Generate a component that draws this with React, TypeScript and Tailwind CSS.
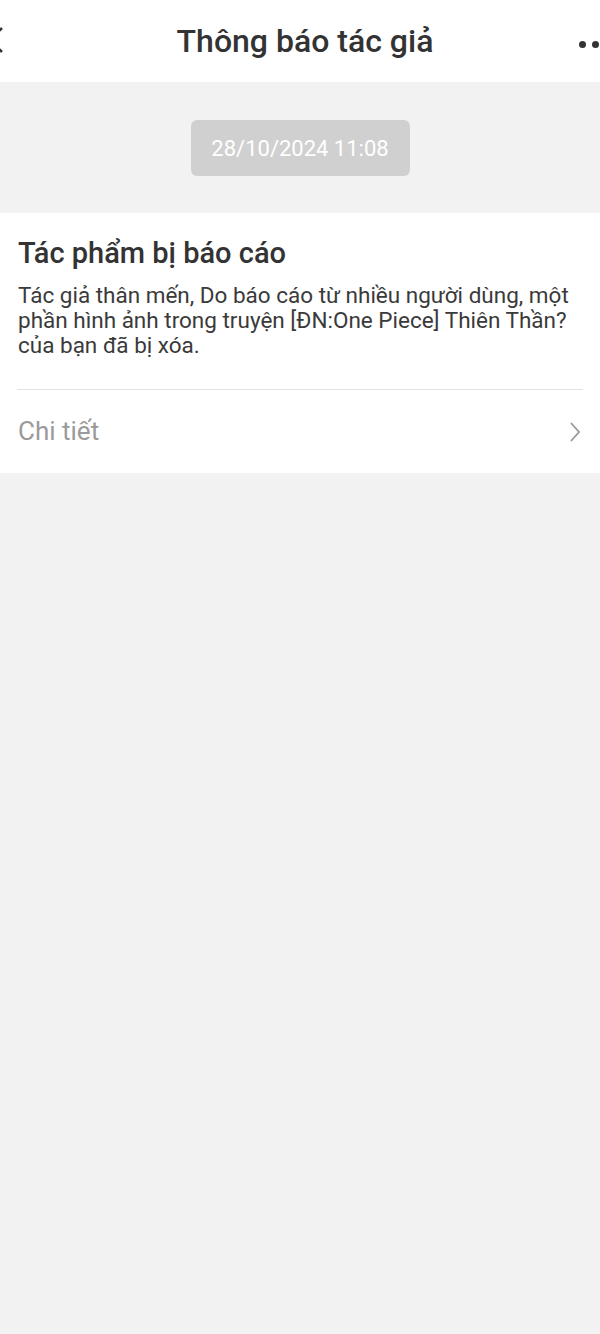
import React from "react";

export default function App() {
  return (
    <div className="min-h-[1334px] w-[600px] overflow-hidden bg-[#f2f2f2] font-['Roboto',sans-serif]">
      <header className="relative flex h-[82px] items-center justify-center bg-white">
        <svg className="absolute left-0 top-[25px]" width="6" height="32" viewBox="0 0 6 32">
          <path d="M2 3 L-10 15 L2 27" fill="none" stroke="#333" strokeWidth="2.5" />
        </svg>
        <h1 className="ml-[10px] text-[32px] leading-none font-medium text-[#333]">Thông báo tác giả</h1>
        <div className="absolute right-[1px] top-[41px] flex gap-[6px]">
          <span className="h-[7px] w-[7px] rounded-full bg-[#333]" />
          <span className="h-[7px] w-[7px] rounded-full bg-[#333]" />
        </div>
      </header>

      <div className="flex justify-center pt-[38px] pb-[37px]">
        <div className="flex h-[56px] w-[219px] items-center justify-center rounded-[6px] bg-[#d0d0d0] text-[22px] text-white">
          28/10/2024 11:08
        </div>
      </div>

      <section className="bg-white">
        <div className="px-[18px] pt-[22px] pb-[31px]">
          <h2 className="text-[29px] leading-[36px] font-medium text-[#333]">Tác phẩm bị báo cáo</h2>
          <p className="mt-[12px] text-[22.5px] leading-[25px] text-[#3a3a3a]">
            Tác giả thân mến, Do báo cáo từ nhiều người dùng, một phần hình ảnh trong truyện [ĐN:One Piece] Thiên Thần? của bạn đã bị xóa.
          </p>
        </div>
        <div className="mx-[17px] h-px bg-[#e3e3e3]" />
        <div className="flex h-[83px] items-center justify-between pr-[18px] pl-[18px]">
          <span className="text-[26px] text-[#9a9a9a]">Chi tiết</span>
          <svg width="14" height="22" viewBox="0 0 14 22">
            <path d="M3 2 L11 11 L3 20" fill="none" stroke="#999" strokeWidth="1.8" />
          </svg>
        </div>
      </section>
    </div>
  );
}
